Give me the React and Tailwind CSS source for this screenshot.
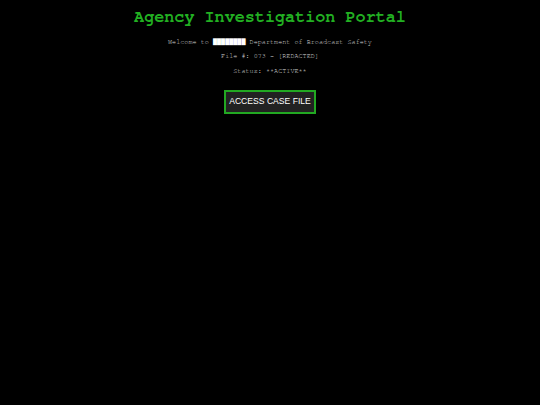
export default function App() {
  return (
    <div className="min-h-[405px] w-full bg-black flex flex-col items-center">
      <h1 className="mt-[7px] text-[16.8px] leading-[20px] font-bold text-[#22b022] font-['Nimbus_Mono_PS','FreeMono','Courier_New',monospace]">
        Agency Investigation Portal
      </h1>
      <div className="mt-[8px] flex flex-col items-center text-[6.8px] leading-[14.3px] text-[#d8d8d8] font-['Nimbus_Mono_PS','FreeMono','Courier_New',monospace] whitespace-pre">
        <p>Welcome to <span className="text-white">████████</span> Department of Broadcast Safety</p>
        <p>File #: 073 - [REDACTED]</p>
        <p>Status: **ACTIVE**</p>
      </div>
      <button className="mt-[12px] w-[92px] h-[24px] bg-[#222222] border-2 border-[#22a822] text-white text-[8.6px] font-['Liberation_Sans',Arial,sans-serif] flex items-center justify-center">
        ACCESS CASE FILE
      </button>
    </div>
  );
}
